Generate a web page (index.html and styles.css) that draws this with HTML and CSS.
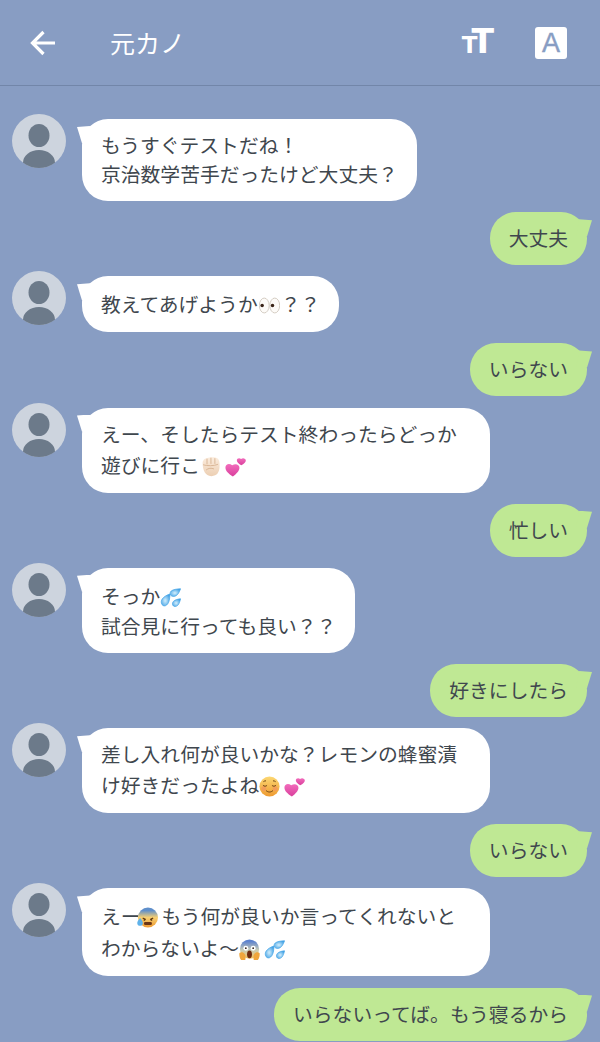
FILE: index.html
```html
<!DOCTYPE html>
<html lang="ja">
<head>
  <meta charset="UTF-8">
  <meta name="viewport" content="width=device-width, initial-scale=1.0">
  <title>元カノ</title>
  <link rel="stylesheet" href="styles.css">
</head>
<body>
  <!-- emoji drawings, reused below -->
  <svg class="sprites" aria-hidden="true">
    <defs>
      <radialGradient id="drop" cx=".45" cy=".55" r=".6">
        <stop offset=".1" stop-color="#c4e7fa"/>
        <stop offset="1" stop-color="#3f9fe4"/>
      </radialGradient>
      <linearGradient id="face" x1="0" y1="0" x2="0" y2="1">
        <stop offset="0" stop-color="#fcd873"/>
        <stop offset="1" stop-color="#ee9a30"/>
      </linearGradient>
      <linearGradient id="cold" x1="0" y1="0" x2="0" y2="1">
        <stop offset=".15" stop-color="#5f8fcb"/>
        <stop offset=".5" stop-color="#f6cf72"/>
        <stop offset="1" stop-color="#ee9a30"/>
      </linearGradient>
      <linearGradient id="fright" x1="0" y1="0" x2="0" y2="1">
        <stop offset=".1" stop-color="#5d83cf"/>
        <stop offset=".55" stop-color="#c9cdb6"/>
        <stop offset="1" stop-color="#f4c35c"/>
      </linearGradient>
      <linearGradient id="skin" x1="0" y1="0" x2="0" y2="1">
        <stop offset="0" stop-color="#fbecdd"/>
        <stop offset="1" stop-color="#eccfb3"/>
      </linearGradient>
      <linearGradient id="pink" x1="0" y1="0" x2="0" y2="1">
        <stop offset="0" stop-color="#f26cbc"/>
        <stop offset="1" stop-color="#d93f9c"/>
      </linearGradient>
    </defs>
    <symbol id="eyes" viewBox="0 0 24 24">
      <ellipse cx="6" cy="12" rx="5.600" ry="8.500" fill="#fdfbf8" stroke="#c9c1b5" stroke-width=".9"/>
      <ellipse cx="18" cy="12" rx="5.600" ry="8.500" fill="#fdfbf8" stroke="#c9c1b5" stroke-width=".9"/>
      <circle cx="3.600" cy="12" r="2" fill="#3a2418"/>
      <circle cx="15.400" cy="12" r="2" fill="#3a2418"/>
    </symbol>
    <symbol id="fist" viewBox="0 0 24 24">
      <path d="M3 8C3 5 5 2.500 8 2.500 11 1 18 1 20.500 3c2 2 2.200 7 1.800 10.500-.5 4.500-2.300 9.500-9.300 9.500C6 23 3 16 3 8z" fill="url(#skin)"/>
      <path d="M8 3v6.500M12.500 2v7M17 2.500v6.500M3.500 10c4 1.500 13 1.500 17-.5M7 16c2.500-2.200 6-2.500 9-1.200" fill="none" stroke="#d6b190" stroke-width="1"/>
    </symbol>
    <symbol id="hearts" viewBox="0 0 24 24">
      <path d="M9 23.500C4 20 .5 17 .5 13c0-3.300 4.200-5.300 7.700-2.300C12 8 16.500 9.700 16.500 13.300c0 3.700-3.300 6.700-7.500 10.200z" fill="url(#pink)"/>
      <path d="M18.500 10.500C15.300 8.500 13.500 6.800 13.500 4.800c0-2.200 3-3.300 4.900-1.300C20.300 1.600 23.800 2.800 23.800 5.200c0 2.200-2.200 3.800-5.300 5.300z" fill="url(#pink)"/>
    </symbol>
    <symbol id="sweat" viewBox="0 0 24 24">
      <path d="M11.500 8C11 12.500 11 19.500 6 21.500 2 22.500 .2 17 2.500 13.800 4.500 11 8 9 11.500 8z" fill="url(#drop)" stroke="#4ba8e8" stroke-width=".9"/>
      <path d="M23.500 2C22 6 20 10.500 15.500 10.800 11.500 10.800 10.500 6.800 12.800 4.600 15 2.800 19.500 2.200 23.500 2z" fill="url(#drop)" stroke="#4ba8e8" stroke-width=".9"/>
      <path d="M23.500 13.500C22.500 17 21.500 21.800 17.500 22.300 14 22.300 13.500 18.500 15.300 16.500 17 14.800 20.300 13.700 23.500 13.500z" fill="url(#drop)" stroke="#4ba8e8" stroke-width=".9"/>
    </symbol>
    <symbol id="smile" viewBox="0 0 24 24">
      <circle cx="12" cy="12" r="11.500" fill="url(#face)"/>
      <circle cx="5.500" cy="14.500" r="2.800" fill="#f3955f" opacity=".75"/>
      <circle cx="18.500" cy="14.500" r="2.800" fill="#f3955f" opacity=".75"/>
      <path d="M4.500 10.500c1.300 1.500 3.500 1.500 4.700.2M14.800 10.700c1.200 1.300 3.400 1.300 4.700-.2M8 16.500c2.200 2.400 5.800 2.400 8 0M5 6.500c1-.8 2-1 3-1M16 5.500c1 0 2 .2 3 1" fill="none" stroke="#6a3f14" stroke-width="1.100"/>
    </symbol>
    <symbol id="coldsweat" viewBox="0 0 24 24">
      <circle cx="12.500" cy="12" r="11.500" fill="url(#cold)"/>
      <path d="M6.500 12.500l3.500 1.800M18.500 12.500l-3.500 1.800" stroke="#5a3410" stroke-width="1.400"/>
      <circle cx="8.500" cy="14.800" r="1" fill="#5a3410"/>
      <circle cx="16.500" cy="14.800" r="1" fill="#5a3410"/>
      <rect x="8" y="17" width="9" height="3.500" rx="1.500" fill="#6a3414"/>
      <path d="M3.500 12.500c2 2.500 3.200 4.300 3.200 5.800a3.200 3.200 0 0 1-6.400 0c0-1.500 1.200-3.300 3.200-5.800z" fill="#5fb2ea"/>
    </symbol>
    <symbol id="scream" viewBox="0 0 24 24">
      <circle cx="12" cy="11.500" r="11" fill="url(#fright)"/>
      <circle cx="7.800" cy="10.500" r="2.800" fill="#fff"/>
      <circle cx="16.200" cy="10.500" r="2.800" fill="#fff"/>
      <circle cx="7.800" cy="10.500" r="1" fill="#33241a"/>
      <circle cx="16.200" cy="10.500" r="1" fill="#33241a"/>
      <ellipse cx="12" cy="17.500" rx="2.800" ry="4.500" fill="#6f2c10"/>
      <path d="M.5 16c2.200-1.500 4.700-.8 6 1s1.200 5 .6 7H2.500C.8 22 0 18.500 .5 16zM23.500 16c-2.200-1.500-4.700-.8-6 1s-1.200 5-.6 7h4.600c1.700-2 2.500-5.500 2-8z" fill="#f0a63c"/>
    </symbol>
    <symbol id="avatar" viewBox="0 0 54 54">
      <circle cx="27" cy="27" r="27" fill="#cdd4de"/>
      <ellipse cx="27" cy="21.500" rx="10.500" ry="11.500" fill="#6c7a8a"/>
      <path d="M11 48.700A16 12.700 0 0 1 43 48.700 27 27 0 0 1 11 48.700z" fill="#6c7a8a"/>
    </symbol>
  </svg>

  <header class="topbar">
    <svg class="back" viewBox="0 0 26 26" aria-hidden="true">
      <path d="M25 13H3M13.500 2L2.500 13l11 11" fill="none" stroke="#fff" stroke-width="3.200"/>
    </svg>
    <h1 class="title">元カノ</h1>
    <div class="tools">
      <div class="font-size">TT</div>
      <div class="translate">A</div>
    </div>
  </header>

  <main class="chat">
    <div class="row">
      <svg class="avatar"><use href="#avatar"/></svg>
      <div class="bubble them">もうすぐテストだね！<br>京治数学苦手だったけど大丈夫？</div>
    </div>
    <div class="bubble me">大丈夫</div>
    <div class="row">
      <svg class="avatar"><use href="#avatar"/></svg>
      <div class="bubble them"><span class="line">教えてあげようか<svg class="emoji roomy"><use href="#eyes"/></svg>？？</span></div>
    </div>
    <div class="bubble me">いらない</div>
    <div class="row">
      <svg class="avatar"><use href="#avatar"/></svg>
      <div class="bubble them wide">えー、そしたらテスト終わったらどっか<span class="line">遊びに行こ<svg class="emoji gap"><use href="#fist"/></svg><svg class="emoji"><use href="#hearts"/></svg></span></div>
    </div>
    <div class="bubble me">忙しい</div>
    <div class="row">
      <svg class="avatar"><use href="#avatar"/></svg>
      <div class="bubble them"><span class="line">そっか<svg class="emoji"><use href="#sweat"/></svg></span>試合見に行っても良い？？</div>
    </div>
    <div class="bubble me">好きにしたら</div>
    <div class="row">
      <svg class="avatar"><use href="#avatar"/></svg>
      <div class="bubble them wide">差し入れ何が良いかな？レモンの蜂蜜漬<span class="line">け好きだったよね<svg class="emoji gap"><use href="#smile"/></svg><svg class="emoji"><use href="#hearts"/></svg></span></div>
    </div>
    <div class="bubble me">いらない</div>
    <div class="row">
      <svg class="avatar"><use href="#avatar"/></svg>
      <div class="bubble them wide"><span class="line">えー<svg class="emoji gap tuck"><use href="#coldsweat"/></svg>もう何が良いか言ってくれないと</span><span class="line">わからないよ〜<svg class="emoji gap"><use href="#scream"/></svg><svg class="emoji"><use href="#sweat"/></svg></span></div>
    </div>
    <div class="bubble me">いらないってば。もう寝るから</div>
  </main>
</body>
</html>
```

FILE: styles.css
```css
html, body {
  height: 100%;
}

body {
  margin: 0;
  height: 1042px;
  overflow: hidden;
  background-color: #889dc3;
  color: #3f474e;
  font-family: "Noto Sans CJK JP", "Liberation Sans", sans-serif;
}

.sprites {
  display: block;
  width: 0;
  height: 0;
}

.topbar {
  display: flex;
  align-items: center;
  height: 85px;
  padding: 0 33px 0 30px;
  border-bottom: 1px solid #7286a9;
  color: white;
}

.back {
  width: 26px;
  height: 26px;
}

.title {
  margin: 0 0 2px 54px;
  font-size: 25px;
  font-weight: 400;
}

.tools {
  display: flex;
  align-items: center;
  gap: 41px;
  margin-left: auto;
}

.font-size {
  margin-top: 2px;
  font-family: "DejaVu Sans", sans-serif;
  font-size: 33px;
  font-weight: bold;
  line-height: 28px;
}

.font-size::first-letter {
  font-size: 23px;
  letter-spacing: -6px;
}

.translate {
  width: 32px;
  height: 32px;
  border-radius: 3px;
  background-color: white;
  color: #889dc3;
  font-family: "Liberation Sans", sans-serif;
  font-size: 27px;
  line-height: 32px;
  text-align: center;
  -webkit-text-stroke: 0.4px #889dc3;
}

.chat {
  display: flex;
  flex-direction: column;
  gap: 11.15px;
  padding: 33px 13px 0 12px;
}

.row {
  display: flex;
  align-items: flex-start;
  gap: 16px;
}

.avatar {
  flex: none;
  width: 54px;
  height: 54px;
  margin-top: -5px;
}

.bubble {
  position: relative;
  box-sizing: border-box;
  padding: 11px 19px 13px;
  border-radius: 26px;
  font-size: 19.8px;
  line-height: 29px;
}

.bubble::before {
  content: "";
  position: absolute;
  top: 7px;
  width: 16px;
  height: 17px;
}

.them {
  background-color: white;
}

.wide {
  width: 408px;
}

.them::before {
  left: -5px;
  background-color: white;
  clip-path: polygon(0 6%, 80% 0, 100% 100%, 31% 100%);
}

.me {
  align-self: flex-end;
  background-color: #bfe894;
  white-space: nowrap;
}

.me::before {
  right: -5px;
  background-color: #bfe894;
  clip-path: polygon(100% 6%, 20% 0, 0 100%, 69% 100%);
}

/* a line holding emoji stands 3px taller */
.line {
  display: block;
  padding-top: 2px;
  line-height: 30px;
}

.emoji {
  width: 21px;
  height: 21px;
  vertical-align: -4px;
}

.emoji.gap {
  margin-right: 4px;
}

.emoji.tuck {
  margin-left: -4px;
}

.emoji.roomy {
  margin: 0 1px;
}
```
